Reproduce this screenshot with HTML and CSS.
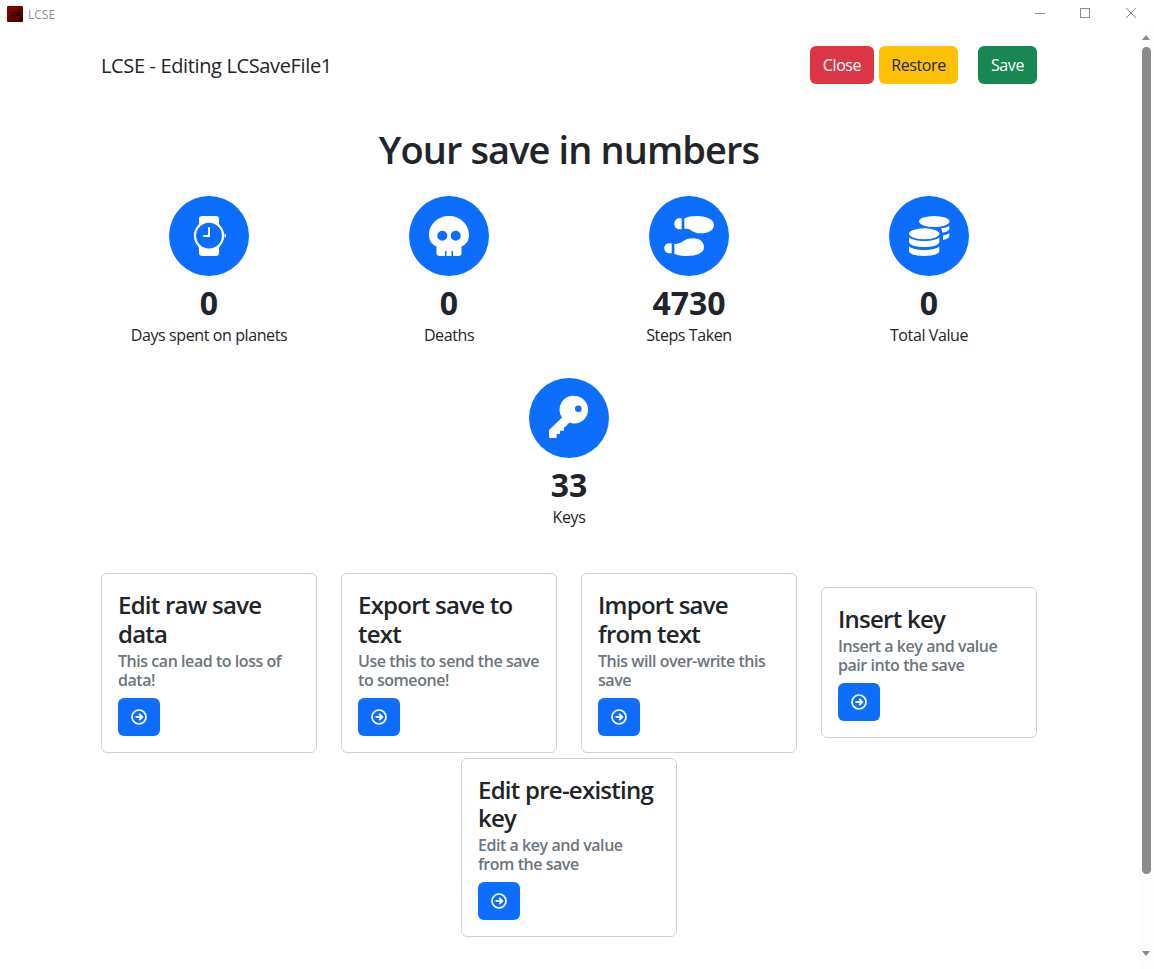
FILE: index.html
```html
<!DOCTYPE html>
<html lang="en">
<head>
<meta charset="utf-8">
<title>LCSE</title>
<link rel="stylesheet" href="styles.css">
</head>
<body>
<div class="window">
  <div class="titlebar">
    <div class="app-icon"><span>LCSE</span></div>
    <div class="app-name">LCSE</div>
    <div class="win-controls">
      <svg width="46" height="30" viewBox="0 0 46 30"><path d="M19 13.500h10" stroke="#8c8c8c" fill="none"/></svg>
      <svg width="46" height="30" viewBox="0 0 46 30"><rect x="18.500" y="8.500" width="9" height="9" stroke="#8c8c8c" fill="none"/></svg>
      <svg width="46" height="30" viewBox="0 0 46 30"><path d="M18 8l10 10M28 8L18 18" stroke="#8c8c8c" fill="none"/></svg>
    </div>
  </div>
  <div class="viewport">
    <main class="page">
      <div class="container">
        <header class="topbar">
          <div class="brand">LCSE - Editing LCSaveFile1</div>
          <div class="actions">
            <button class="btn btn-red">Close</button>
            <button class="btn btn-yellow">Restore</button>
            <button class="btn btn-green">Save</button>
          </div>
        </header>
        <h1 class="headline">Your save in numbers</h1>
        <section class="stats">
          <div class="stat">
            <div class="stat-icon">
              <svg viewBox="0 0 80 80" width="80" height="80"><path fill="#fff" d="M30 23a3 3 0 0 1 3-3h14a3 3 0 0 1 3 3v4.500c0 1 .5 1.500 1 2.500H29c.5-1 1-1.500 1-2.500zM29 50h22c-.5 1-1 1.500-1 2.500V57a3 3 0 0 1-3 3H33a3 3 0 0 1-3-3v-4.500c0-1-.5-1.500-1-2.500z"/><circle cx="40" cy="39.700" r="14" fill="#0d6efd" stroke="#fff" stroke-width="2.200"/><path fill="#fff" d="M55.500 38h.7a.8.800 0 0 1 .8.800v1.800a.8.800 0 0 1-.8.800h-.7z"/><path d="M40 32v8h-5" fill="none" stroke="#fff" stroke-width="2" stroke-linecap="round"/></svg>
            </div>
            <div class="stat-value">0</div>
            <div class="stat-label">Days spent on planets</div>
          </div>
          <div class="stat">
            <div class="stat-icon">
              <svg viewBox="0 0 80 80" width="80" height="80"><path fill="#fff" fill-rule="evenodd" d="M40 20c11 0 20 8 20 19 0 6-3 9.500-7.500 11.500V57a3 3 0 0 1-3 3H44v-5h-1.500v5h-5v-5H36v5h-5.500a3 3 0 0 1-3-3v-6.500C23 48.500 20 45 20 39c0-11 9-19 20-19zM33.300 34.700a5 5 0 1 0 0 10 5 5 0 0 0 0-10zM46.700 34.700a5 5 0 1 0 0 10 5 5 0 0 0 0-10z"/></svg>
            </div>
            <div class="stat-value">0</div>
            <div class="stat-label">Deaths</div>
          </div>
          <div class="stat">
            <div class="stat-icon">
              <svg viewBox="0 0 80 80" width="80" height="80"><path fill="#fff" d="M32.700 22.300v11h-2.500c-2.800 0-4.900-2.500-4.900-5.500s2.100-5.500 4.900-5.500zM35.300 22.500c3-1.700 7-2.500 13-2.500 9.500 0 16.700 3.700 16.700 8.700s-5 8.600-13.500 8.600c-4 0-6.500-1.100-8.800-2.600-2-1.300-4.200-2.200-7.400-2.200zM22.700 47.300v10h-2.500c-2.800 0-4.900-2.200-4.900-5s2.100-5 4.900-5zM25.300 57.800c3.500 1.500 7 2.200 13 2.200 10.500 0 16.700-3.500 16.700-9s-5-8.700-11-8.700c-4.500 0-7.300 1.300-9.800 3-2.200 1.500-4.700 2.500-8.900 2.700z"/></svg>
            </div>
            <div class="stat-value">4730</div>
            <div class="stat-label">Steps Taken</div>
          </div>
          <div class="stat">
            <div class="stat-icon">
              <svg viewBox="0 0 80 80" width="80" height="80"><ellipse cx="45.200" cy="25.500" rx="15.200" ry="5.500" fill="#fff"/><path fill="#fff" d="M52 32.300c3.500-.4 6.500-1.300 8.300-2.600v3c0 1.800-3 3.300-7 3.900-.2-1.800-.6-3.100-1.300-4.300zM54 39.500c2.700-.5 5-1.300 6.300-2.400v3c0 1.700-2.500 3.200-6.300 3.800z"/><ellipse cx="35.200" cy="37.800" rx="15.200" ry="5.500" fill="#fff"/><path fill="#fff" d="M20 41.500c2.800 2.200 8.300 3.500 15.200 3.500s12.400-1.300 15.100-3.500v4.500c0 3-6.800 5-15.100 5S20 49 20 46zM20 50.500C22.800 52.700 28.300 54 35.200 54s12.400-1.300 15.100-3.500V55c0 3-6.800 5-15.100 5S20 58 20 55z"/></svg>
            </div>
            <div class="stat-value">0</div>
            <div class="stat-label">Total Value</div>
          </div>
          <div class="stat">
            <div class="stat-icon">
              <svg viewBox="0 0 80 80" width="80" height="80"><path fill="#fff" fill-rule="evenodd" d="M45.400 17.900a13.800 13.800 0 1 1-5 26.700L36 49.300h-1v3.400h-4V56h-3.300v4h-6.200a1.500 1.500 0 0 1-1.500-1.500V52l13-12.500a13.800 13.800 0 0 1 12.400-21.600zM49.300 27.400a3.300 3.300 0 1 0 0 6.600 3.300 3.300 0 0 0 0-6.600z"/></svg>
            </div>
            <div class="stat-value">33</div>
            <div class="stat-label">Keys</div>
          </div>
        </section>
        <section class="cards">
          <div class="cell">
            <div class="card">
              <h2 class="card-title">Edit raw save data</h2>
              <p class="card-sub">This can lead to loss of data!</p>
              <button class="btn btn-go"><svg class="go" viewBox="0 0 16 16"><circle cx="8" cy="8" r="7" fill="none" stroke="#fff" stroke-width="1.700"/><path d="M4.500 8H11M8.300 5l3 3-3 3" fill="none" stroke="#fff" stroke-width="1.800"/></svg></button>
            </div>
          </div>
          <div class="cell">
            <div class="card">
              <h2 class="card-title">Export save to text</h2>
              <p class="card-sub">Use this to send the save to someone!</p>
              <button class="btn btn-go"><svg class="go" viewBox="0 0 16 16"><circle cx="8" cy="8" r="7" fill="none" stroke="#fff" stroke-width="1.700"/><path d="M4.500 8H11M8.300 5l3 3-3 3" fill="none" stroke="#fff" stroke-width="1.800"/></svg></button>
            </div>
          </div>
          <div class="cell">
            <div class="card">
              <h2 class="card-title">Import save from text</h2>
              <p class="card-sub">This will over-write this save</p>
              <button class="btn btn-go"><svg class="go" viewBox="0 0 16 16"><circle cx="8" cy="8" r="7" fill="none" stroke="#fff" stroke-width="1.700"/><path d="M4.500 8H11M8.300 5l3 3-3 3" fill="none" stroke="#fff" stroke-width="1.800"/></svg></button>
            </div>
          </div>
          <div class="cell">
            <div class="card">
              <h2 class="card-title">Insert key</h2>
              <p class="card-sub">Insert a key and value pair into the save</p>
              <button class="btn btn-go"><svg class="go" viewBox="0 0 16 16"><circle cx="8" cy="8" r="7" fill="none" stroke="#fff" stroke-width="1.700"/><path d="M4.500 8H11M8.300 5l3 3-3 3" fill="none" stroke="#fff" stroke-width="1.800"/></svg></button>
            </div>
          </div>
          <div class="cell">
            <div class="card">
              <h2 class="card-title">Edit pre-existing key</h2>
              <p class="card-sub">Edit a key and value from the save</p>
              <button class="btn btn-go"><svg class="go" viewBox="0 0 16 16"><circle cx="8" cy="8" r="7" fill="none" stroke="#fff" stroke-width="1.700"/><path d="M4.500 8H11M8.300 5l3 3-3 3" fill="none" stroke="#fff" stroke-width="1.800"/></svg></button>
            </div>
          </div>
        </section>
      </div>
    </main>
    <aside class="scrollbar">
      <div class="arrow-up"></div>
      <div class="thumb"></div>
      <div class="arrow-down"></div>
    </aside>
  </div>
</div>
</body>
</html>
```
FILE: styles.css
```css
* { box-sizing: border-box; }
html, body { margin: 0; height: 100%; overflow: hidden; background: #fff; }
body { font-family: "Open Sans", "Noto Sans", sans-serif; font-size: 16px; color: #212529; letter-spacing: -0.4px; }
.window { height: 969px; display: flex; flex-direction: column; }

.titlebar { height: 30px; flex: none; display: flex; align-items: center; padding-left: 7px; }
.app-icon { width: 16px; height: 16px; margin-top: -2px; background: linear-gradient(135deg, #8a0808, #3c0000); border-radius: 1px; display: flex; align-items: center; justify-content: center; overflow: hidden; }
.app-icon span { font-size: 5px; letter-spacing: -0.3px; color: #180000; font-weight: 700; }
.app-name { margin-left: 5px; margin-top: -2px; font-size: 12px; letter-spacing: 0; color: #8f8f8f; }
.win-controls { margin-left: auto; display: flex; height: 30px; }
.win-controls svg { display: block; }

.viewport { flex: 1; display: flex; min-height: 0; }
.page { flex: 1; min-width: 0; overflow: hidden; }
.container { width: 960px; margin: 0 auto; padding: 0 12px; }

.topbar { display: flex; align-items: center; justify-content: space-between; padding-top: 16px; height: 54px; }
.brand { font-size: 20px; line-height: 24px; letter-spacing: -0.36px; margin-top: 2px; }
.actions { display: flex; }
.btn { height: 38px; padding: 0 13px; border: 0; border-radius: 6px; font: inherit; letter-spacing: inherit; display: flex; align-items: center; justify-content: center; }
.btn-red { width: 64px; background: #dc3545; color: #fff; }
.btn-yellow { width: 79px; margin-left: 5px; background: #ffc107; color: #212529; }
.btn-green { width: 59px; margin-left: 20px; background: #198754; color: #fff; }

.headline { margin: 41px 0 23px; text-align: center; font-size: 38px; line-height: 48px; font-weight: 600; letter-spacing: -0.9px; }

.stats { display: flex; flex-wrap: wrap; justify-content: center; margin: 0 -12px; row-gap: 31px; }
.stat { width: 240px; display: flex; flex-direction: column; align-items: center; }
.stat-icon { width: 80px; height: 80px; border-radius: 50%; background: #0d6efd; }
.stat-icon svg { display: block; }
.stat-value { font-size: 32px; line-height: 38px; font-weight: 700; margin-top: 8px; letter-spacing: 0; }
.stat-label { font-size: 16px; line-height: 24px; margin-top: 1px; }

.cards { display: flex; flex-wrap: wrap; justify-content: center; align-items: center; margin: 44px -12px 0; row-gap: 5px; }
.cell { width: 240px; padding: 0 12px; }
.card { border: 1px solid #d2d2d2; border-radius: 6px; padding: 16px; background: #fff; }
.card-title { margin: 1px 0 0; font-size: 24px; line-height: 28.8px; font-weight: 600; letter-spacing: -0.75px; }
.card-sub { margin: 3px 0 8px; font-size: 16px; line-height: 19px; font-weight: 600; color: #6c757d; letter-spacing: -0.45px; }
.btn-go { width: 42px; background: #0d6efd; }
.go { width: 16px; height: 16px; display: block; }

.scrollbar { width: 16px; flex: none; background: #fdfdfd; display: flex; flex-direction: column; align-items: center; }
.arrow-up { margin-top: 5px; width: 0; height: 0; border-left: 4.500px solid transparent; border-right: 4.500px solid transparent; border-bottom: 5px solid #8b8b8b; }
.thumb { margin-top: 7px; width: 9px; height: 827px; background: #8b8b8b; border-radius: 4.500px; }
.arrow-down { margin-top: 77px; width: 0; height: 0; border-left: 4.500px solid transparent; border-right: 4.500px solid transparent; border-top: 5px solid #8b8b8b; }
```
